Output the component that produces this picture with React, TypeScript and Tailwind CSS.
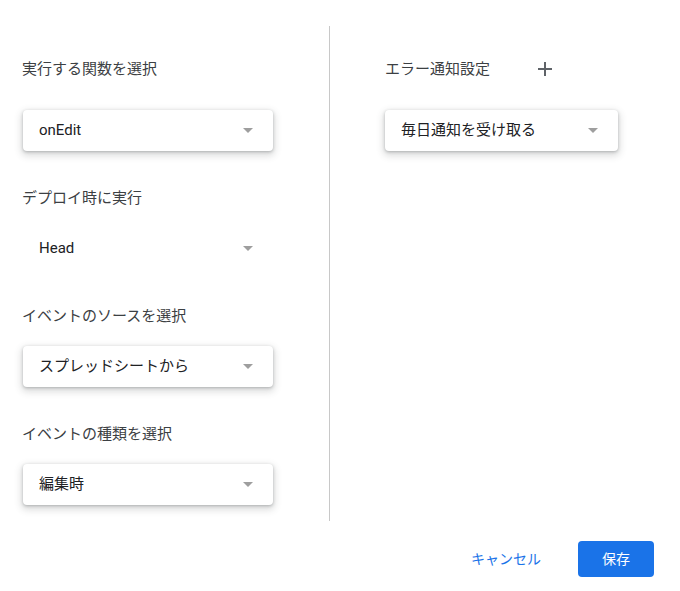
import React from 'react';

const font = { fontFamily: 'Roboto, "Noto Sans CJK JP", sans-serif' };

const Arrow = () => (
  <span className="w-0 h-0 border-l-[5px] border-r-[5px] border-t-[5px] border-l-transparent border-r-transparent border-t-[#9e9e9e]" />
);

const Select = ({ value, flat = false, width = 'w-[250px]' }: { value: string; flat?: boolean; width?: string }) => (
  <div
    className={`${width} h-[41px] flex items-center justify-between pl-4 pr-5 rounded bg-white text-[15px] text-[#202124] ${
      flat ? '' : 'shadow-[0_1px_3px_0_rgba(60,64,67,0.3),0_3px_7px_2px_rgba(60,64,67,0.17)]'
    }`}
  >
    <span>{value}</span>
    <Arrow />
  </div>
);

const Label = ({ children, className = '' }: { children: React.ReactNode; className?: string }) => (
  <div className={`text-[15px] leading-5 text-[#3c4043] -ml-px ${className}`}>{children}</div>
);

const App = () => {
  return (
    <div className="w-[680px] h-[591px] bg-white" style={font}>
      <div className="flex pt-[26px]">
        {/* 左カラム */}
        <div className="w-[329px] pl-[23px] flex flex-col">
          <Label className="mt-[33px]">実行する関数を選択</Label>
          <div className="mt-[31px]">
            <Select value="onEdit" />
          </div>
          <Label className="mt-[37px]">デプロイ時に実行</Label>
          <div className="mt-5">
            <Select value="Head" flat />
          </div>
          <Label className="mt-[37px]">イベントのソースを選択</Label>
          <div className="mt-5">
            <Select value="スプレッドシートから" />
          </div>
          <Label className="mt-[37px]">イベントの種類を選択</Label>
          <div className="mt-5">
            <Select value="編集時" />
          </div>
        </div>

        <div className="w-px h-[495px] bg-[#c8c8c8]" />

        {/* 右カラム */}
        <div className="pl-[55px] flex flex-col">
          <div className="mt-[33px] flex items-center h-5">
            <div className="w-[153px] text-[15px] leading-5 text-[#3c4043]">エラー通知設定</div>
            <svg width="14" height="14" viewBox="0 0 14 14">
              <path d="M7 0v14M0 7h14" stroke="#5f6368" strokeWidth="2" />
            </svg>
          </div>
          <div className="mt-[31px]">
            <Select value="毎日通知を受け取る" width="w-[233px]" />
          </div>
        </div>
      </div>

      {/* ボタン */}
      <div className="flex justify-end items-center gap-[13px] pr-[26px] mt-5">
        <button className="h-9 px-6 text-sm text-[#1a73e8]">キャンセル</button>
        <button className="h-9 w-[76px] rounded bg-[#1a73e8] text-sm text-white">保存</button>
      </div>
    </div>
  );
};

export default App;
